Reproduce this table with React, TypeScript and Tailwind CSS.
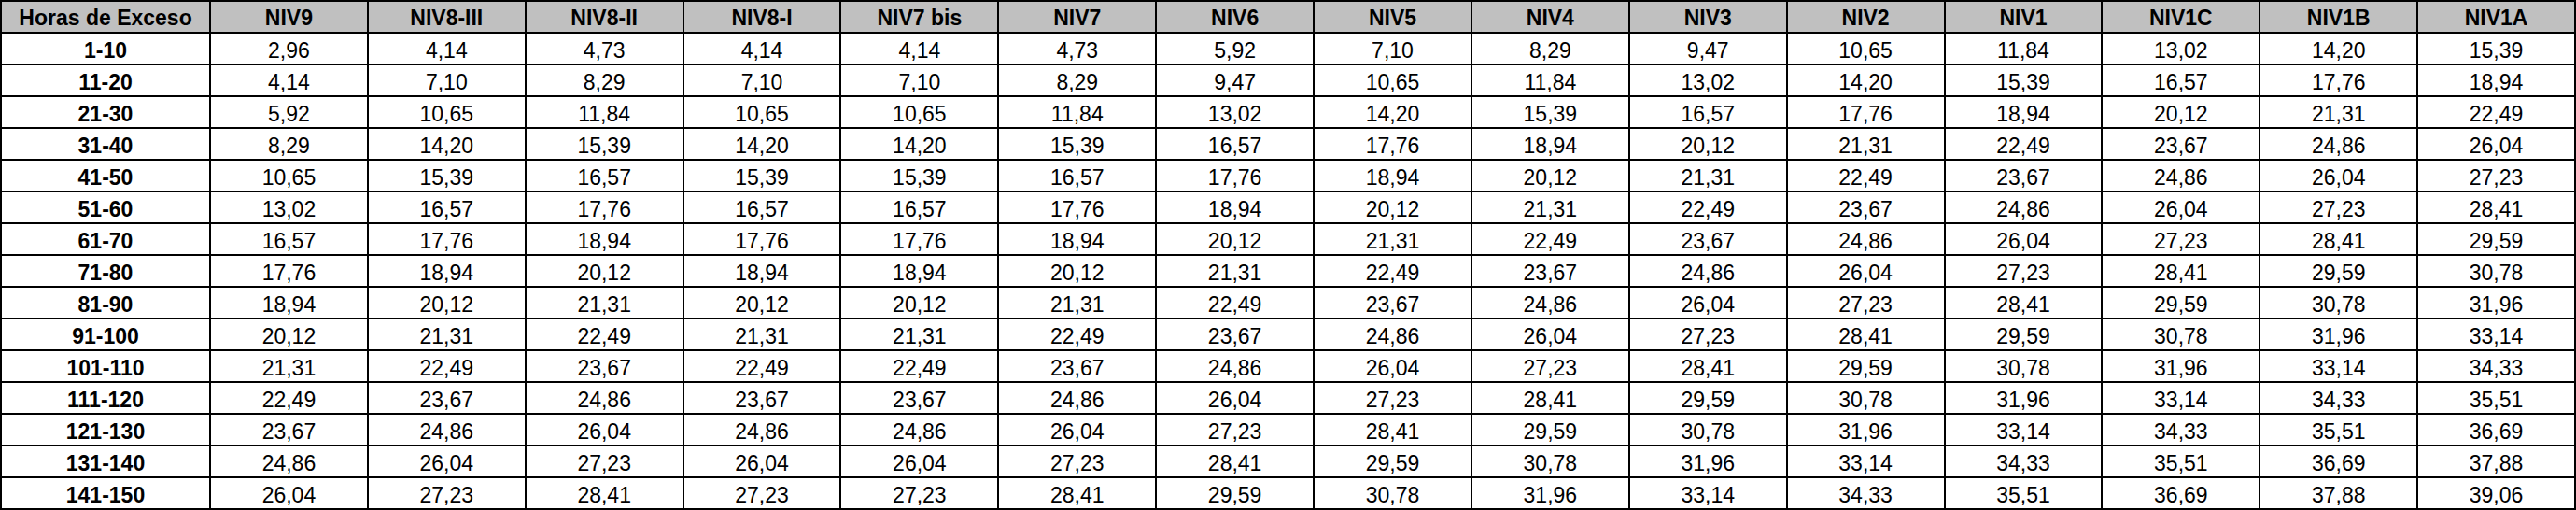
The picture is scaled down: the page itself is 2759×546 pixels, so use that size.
import React from 'react';

const headers = [
  'Horas de Exceso',
  'NIV9',
  'NIV8-III',
  'NIV8-II',
  'NIV8-I',
  'NIV7 bis',
  'NIV7',
  'NIV6',
  'NIV5',
  'NIV4',
  'NIV3',
  'NIV2',
  'NIV1',
  'NIV1C',
  'NIV1B',
  'NIV1A',
];

const rows: [string, string[]][] = [
  ['1-10', ['2,96', '4,14', '4,73', '4,14', '4,14', '4,73', '5,92', '7,10', '8,29', '9,47', '10,65', '11,84', '13,02', '14,20', '15,39']],
  ['11-20', ['4,14', '7,10', '8,29', '7,10', '7,10', '8,29', '9,47', '10,65', '11,84', '13,02', '14,20', '15,39', '16,57', '17,76', '18,94']],
  ['21-30', ['5,92', '10,65', '11,84', '10,65', '10,65', '11,84', '13,02', '14,20', '15,39', '16,57', '17,76', '18,94', '20,12', '21,31', '22,49']],
  ['31-40', ['8,29', '14,20', '15,39', '14,20', '14,20', '15,39', '16,57', '17,76', '18,94', '20,12', '21,31', '22,49', '23,67', '24,86', '26,04']],
  ['41-50', ['10,65', '15,39', '16,57', '15,39', '15,39', '16,57', '17,76', '18,94', '20,12', '21,31', '22,49', '23,67', '24,86', '26,04', '27,23']],
  ['51-60', ['13,02', '16,57', '17,76', '16,57', '16,57', '17,76', '18,94', '20,12', '21,31', '22,49', '23,67', '24,86', '26,04', '27,23', '28,41']],
  ['61-70', ['16,57', '17,76', '18,94', '17,76', '17,76', '18,94', '20,12', '21,31', '22,49', '23,67', '24,86', '26,04', '27,23', '28,41', '29,59']],
  ['71-80', ['17,76', '18,94', '20,12', '18,94', '18,94', '20,12', '21,31', '22,49', '23,67', '24,86', '26,04', '27,23', '28,41', '29,59', '30,78']],
  ['81-90', ['18,94', '20,12', '21,31', '20,12', '20,12', '21,31', '22,49', '23,67', '24,86', '26,04', '27,23', '28,41', '29,59', '30,78', '31,96']],
  ['91-100', ['20,12', '21,31', '22,49', '21,31', '21,31', '22,49', '23,67', '24,86', '26,04', '27,23', '28,41', '29,59', '30,78', '31,96', '33,14']],
  ['101-110', ['21,31', '22,49', '23,67', '22,49', '22,49', '23,67', '24,86', '26,04', '27,23', '28,41', '29,59', '30,78', '31,96', '33,14', '34,33']],
  ['111-120', ['22,49', '23,67', '24,86', '23,67', '23,67', '24,86', '26,04', '27,23', '28,41', '29,59', '30,78', '31,96', '33,14', '34,33', '35,51']],
  ['121-130', ['23,67', '24,86', '26,04', '24,86', '24,86', '26,04', '27,23', '28,41', '29,59', '30,78', '31,96', '33,14', '34,33', '35,51', '36,69']],
  ['131-140', ['24,86', '26,04', '27,23', '26,04', '26,04', '27,23', '28,41', '29,59', '30,78', '31,96', '33,14', '34,33', '35,51', '36,69', '37,88']],
  ['141-150', ['26,04', '27,23', '28,41', '27,23', '27,23', '28,41', '29,59', '30,78', '31,96', '33,14', '34,33', '35,51', '36,69', '37,88', '39,06']],
];

export default function App() {
  return (
    <div className="w-[2759px] h-[546px] bg-white font-['Liberation_Sans',Arial,sans-serif] text-[23px] text-black">
      {/* grid lines are the black background showing through the gaps */}
      <div className="grid grid-cols-[222px_repeat(15,minmax(0,1fr))] auto-rows-[32px] gap-[2px] p-[2px] bg-black">
        {headers.map((h) => (
          <div key={h} className="flex items-center justify-center bg-[#c0c0c0] font-bold pt-[2px] whitespace-nowrap">
            {h}
          </div>
        ))}
        {rows.map(([range, values]) => (
          <React.Fragment key={range}>
            <div className="flex items-center justify-center bg-white font-bold pt-[4px]">{range}</div>
            {values.map((v, i) => (
              <div key={i} className="flex items-center justify-center bg-white pt-[4px]">
                {v}
              </div>
            ))}
          </React.Fragment>
        ))}
      </div>
    </div>
  );
}
